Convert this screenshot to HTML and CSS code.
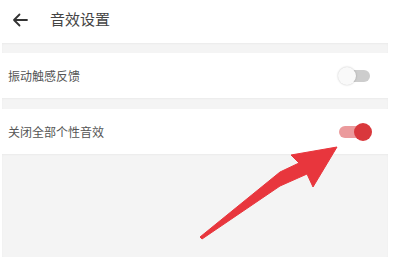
FILE: index.html
```html
<!DOCTYPE html>
<html lang="zh">
<head>
<meta charset="utf-8">
<title>音效设置</title>
<link rel="stylesheet" href="styles.css">
</head>
<body>
<div class="page">
  <header class="header">
    <svg class="back" width="16" height="14" viewBox="0 0 16 14">
      <path d="M15 7H2M7.5 1.5L2 7l5.5 5.5" fill="none" stroke="#333" stroke-width="1.8" stroke-linecap="round" stroke-linejoin="round"/>
    </svg>
    <span class="title">音效设置</span>
  </header>
  <div class="band band-top"></div>
  <div class="row">
    <span class="label">振动触感反馈</span>
    <span class="switch off"><span class="track"></span><span class="thumb"></span></span>
  </div>
  <div class="band"></div>
  <div class="row">
    <span class="label">关闭全部个性音效</span>
    <span class="switch on"><span class="track"></span><span class="thumb"></span></span>
  </div>
  <div class="band fill"></div>
  <svg class="pointer" width="400" height="263" viewBox="0 0 400 263">
    <polygon points="337,147 291,155 299,163 280,172 200,237 202,239 280,186 307,174 313,187" fill="#e8363d" stroke="#e8363d" stroke-width="1" stroke-linejoin="round"/>
  </svg>
</div>
</body>
</html>
```
FILE: styles.css
```css
html, body {
  margin: 0;
  padding: 0;
  background: #ffffff;
}
.page {
  position: relative;
  width: 400px;
  height: 263px;
  overflow: hidden;
  font-family: "Noto Sans CJK SC", "Noto Sans", sans-serif;
}
.header {
  height: 43px;
  box-sizing: border-box;
  display: flex;
  align-items: flex-start;
  padding: 10px 0 0 12px;
}
.back {
  margin-top: 3px;
}
.title {
  margin-left: 22px;
  font-size: 15px;
  line-height: 18px;
  color: #444;
}
.band {
  height: 11px;
  margin: 0 12px 0 2px;
  background: #f4f4f4;
  box-shadow: inset 0 1px 2px rgba(0, 0, 0, 0.04);
}
.band-top {
  height: 10px;
}
.fill {
  height: 103px;
}
.row {
  height: 45px;
  display: flex;
  align-items: center;
  justify-content: space-between;
  padding: 0 28px 0 8px;
  background: #fff;
}
.label {
  font-size: 12px;
  color: #555;
  letter-spacing: 0;
}
.switch {
  position: relative;
  width: 34px;
  height: 18px;
}
.track {
  position: absolute;
  left: 3px;
  right: 2px;
  top: 3px;
  height: 12px;
  border-radius: 6px;
}
.thumb {
  position: absolute;
  top: 0;
  width: 18px;
  height: 18px;
  border-radius: 50%;
}
.off .track {
  background: #cdcdcd;
}
.off .thumb {
  left: 0;
  background: #f9f9f9;
  box-shadow: 0 0 2px rgba(0, 0, 0, 0.25);
}
.on .track {
  left: 1px;
  background: #eb9a9c;
}
.on .thumb {
  right: 0;
  background: #d9383c;
}
.pointer {
  position: absolute;
  left: 0;
  top: 0;
}
```
